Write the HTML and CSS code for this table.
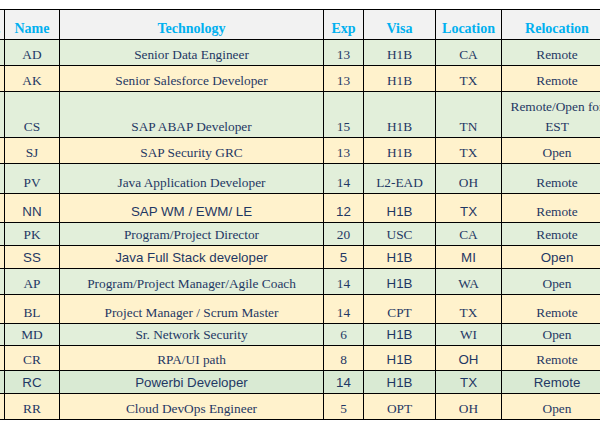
FILE: index.html
```html
<!DOCTYPE html>
<html>
<head>
<meta charset="utf-8">
<link rel="stylesheet" href="styles.css">
</head>
<body>
<div class="viewport">
<table class="grid">
  <thead>
    <tr class="h30 head">
      <th class="c0">S.No.</th>
      <th class="c1">Name</th>
      <th class="c2">Technology</th>
      <th class="c3">Exp</th>
      <th class="c4">Visa</th>
      <th class="c5">Location</th>
      <th class="c6">Relocation</th>
    </tr>
  </thead>
  <tbody>
    <tr class="h26 g"><td></td><td>AD</td><td>Senior Data Engineer</td><td>13</td><td>H1B</td><td>CA</td><td>Remote</td></tr>
    <tr class="h26 y"><td></td><td>AK</td><td>Senior Salesforce Developer</td><td>13</td><td>H1B</td><td>TX</td><td>Remote</td></tr>
    <tr class="h46 g"><td></td><td>CS</td><td>SAP ABAP Developer</td><td>15</td><td>H1B</td><td>TN</td><td>Remote/Open for EST</td></tr>
    <tr class="h26 y"><td></td><td>SJ</td><td>SAP Security GRC</td><td>13</td><td>H1B</td><td>TX</td><td>Open</td></tr>
    <tr class="h30 g"><td></td><td>PV</td><td>Java Application Developer</td><td>14</td><td>L2-EAD</td><td>OH</td><td>Remote</td></tr>
    <tr class="h29 y"><td></td><td class="sans">NN</td><td class="sans">SAP WM / EWM/ LE</td><td class="sans">12</td><td class="sans">H1B</td><td class="sans">TX</td><td>Remote</td></tr>
    <tr class="h23 g"><td></td><td>PK</td><td>Program/Project Director</td><td>20</td><td>USC</td><td>CA</td><td>Remote</td></tr>
    <tr class="h23 y"><td></td><td class="sans">SS</td><td class="sans">Java Full Stack developer</td><td class="sans">5</td><td class="sans">H1B</td><td class="sans">MI</td><td class="sans">Open</td></tr>
    <tr class="h26 g"><td></td><td>AP</td><td>Program/Project Manager/Agile Coach</td><td>14</td><td class="sans">H1B</td><td>WA</td><td>Open</td></tr>
    <tr class="h29 y"><td></td><td>BL</td><td>Project Manager / Scrum Master</td><td>14</td><td>CPT</td><td>TX</td><td>Remote</td></tr>
    <tr class="h22 g"><td></td><td>MD</td><td>Sr. Network Security</td><td>6</td><td class="sans">H1B</td><td>WI</td><td>Open</td></tr>
    <tr class="h25 y"><td></td><td>CR</td><td>RPA/UI path</td><td>8</td><td class="sans">H1B</td><td class="sans">OH</td><td>Remote</td></tr>
    <tr class="h23 g2"><td></td><td class="sans">RC</td><td class="sans">Powerbi Developer</td><td class="sans">14</td><td class="sans">H1B</td><td class="sans">TX</td><td class="sans">Remote</td></tr>
    <tr class="h26 y"><td></td><td>RR</td><td>Cloud DevOps Engineer</td><td>5</td><td>OPT</td><td>OH</td><td>Open</td></tr>
  </tbody>
</table>
</div>
</body>
</html>
```

FILE: styles.css
```css
html, body {
  margin: 0;
  padding: 0;
  background: #ffffff;
}

.viewport {
  width: 600px;
  height: 436px;
  overflow: hidden;
  padding-top: 9px;
  box-sizing: border-box;
}

.grid {
  border-collapse: collapse;
  table-layout: fixed;
  width: 648px;
  margin-left: -36px;
  font-family: "Liberation Serif", "Times New Roman", serif;
  font-size: 13.33px;
  line-height: 20px;
  color: #1f3864;
}

.grid th,
.grid td {
  box-sizing: border-box;
  border: 1px solid #000000;
  padding: 0 2px;
  text-align: center;
  vertical-align: bottom;
  overflow: hidden;
}

.grid th {
  font-size: 14px;
  font-weight: bold;
  color: #00b0f0;
  white-space: nowrap;
}

.head { background: #f2f2f2; }
.g { background: #e2efda; }
.g2 { background: #d9ead3; }
.y { background: #fff2cc; }

.sans {
  font-family: "Liberation Sans", Arial, sans-serif;
}

.c0 { width: 40px; }
.c1 { width: 55px; }
.c2 { width: 264px; }
.c3 { width: 40px; }
.c4 { width: 72px; }
.c5 { width: 66px; }
.c6 { width: 111px; }

.h22 { height: 22px; }
.h23 { height: 23px; }
.h25 { height: 25px; }
.h26 { height: 26px; }
.h29 { height: 29px; }
.h30 { height: 30px; }
.h46 { height: 46px; }
```
